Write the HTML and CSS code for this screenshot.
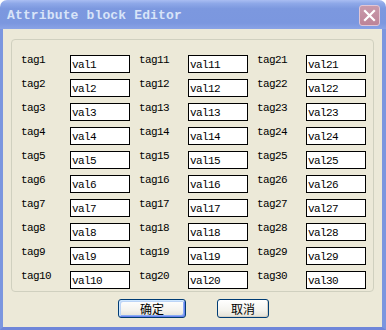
FILE: index.html
```html
<!DOCTYPE html>
<html lang="zh-CN">
<head>
    <meta charset="UTF-8">
    <title>Attribute block Editor</title>
    <link rel="stylesheet" href="styles.css">
</head>
<body>

    <div class="janela">
        <div class="titulo">
            <span class="titulo-texto">Attribute block Editor</span>
            <button class="fechar" aria-label="Fechar">
                <svg width="13" height="13" viewBox="0 0 13 13">
                    <path d="M2 2 L11 11 M11 2 L2 11" stroke="#ffffff" stroke-width="2.2" stroke-linecap="square" fill="none"/>
                </svg>
            </button>
        </div>
        <div class="cliente">
            <div class="grupo">
                <div class="campos">
                    <div class="campo"><span>tag1</span><input type="text" value="val1"></div>
                    <div class="campo"><span>tag2</span><input type="text" value="val2"></div>
                    <div class="campo"><span>tag3</span><input type="text" value="val3"></div>
                    <div class="campo"><span>tag4</span><input type="text" value="val4"></div>
                    <div class="campo"><span>tag5</span><input type="text" value="val5"></div>
                    <div class="campo"><span>tag6</span><input type="text" value="val6"></div>
                    <div class="campo"><span>tag7</span><input type="text" value="val7"></div>
                    <div class="campo"><span>tag8</span><input type="text" value="val8"></div>
                    <div class="campo"><span>tag9</span><input type="text" value="val9"></div>
                    <div class="campo"><span>tag10</span><input type="text" value="val10"></div>
                    <div class="campo"><span>tag11</span><input type="text" value="val11"></div>
                    <div class="campo"><span>tag12</span><input type="text" value="val12"></div>
                    <div class="campo"><span>tag13</span><input type="text" value="val13"></div>
                    <div class="campo"><span>tag14</span><input type="text" value="val14"></div>
                    <div class="campo"><span>tag15</span><input type="text" value="val15"></div>
                    <div class="campo"><span>tag16</span><input type="text" value="val16"></div>
                    <div class="campo"><span>tag17</span><input type="text" value="val17"></div>
                    <div class="campo"><span>tag18</span><input type="text" value="val18"></div>
                    <div class="campo"><span>tag19</span><input type="text" value="val19"></div>
                    <div class="campo"><span>tag20</span><input type="text" value="val20"></div>
                    <div class="campo"><span>tag21</span><input type="text" value="val21"></div>
                    <div class="campo"><span>tag22</span><input type="text" value="val22"></div>
                    <div class="campo"><span>tag23</span><input type="text" value="val23"></div>
                    <div class="campo"><span>tag24</span><input type="text" value="val24"></div>
                    <div class="campo"><span>tag25</span><input type="text" value="val25"></div>
                    <div class="campo"><span>tag26</span><input type="text" value="val26"></div>
                    <div class="campo"><span>tag27</span><input type="text" value="val27"></div>
                    <div class="campo"><span>tag28</span><input type="text" value="val28"></div>
                    <div class="campo"><span>tag29</span><input type="text" value="val29"></div>
                    <div class="campo"><span>tag30</span><input type="text" value="val30"></div>
                </div>
            </div>
            <div class="botoes">
                <button class="botao padrao">确定</button>
                <button class="botao cancelar">取消</button>
            </div>
        </div>
    </div>

</body>
</html>
```

FILE: styles.css
```css
body {
    margin: 0;
    background: #ffffff;
    font-family: 'Liberation Mono', monospace;
}
.janela {
    width: 386px;
    height: 330px;
    display: flex;
    flex-direction: column;
}
.titulo {
    height: 29px;
    flex: none;
    box-sizing: border-box;
    display: flex;
    align-items: center;
    padding: 0 6px 0 7px;
    border-radius: 7px 7px 0 0;
    background: linear-gradient(#a9bdf2 0%, #8ea8e8 12%, #7c98df 30%, #7b97df 80%, #8aa3e6 100%);
}
.titulo-texto {
    flex: 1;
    color: #d8e4f8;
    font-weight: bold;
    font-size: 13px;
    letter-spacing: 0.15px;
    margin-top: 1px;
}
.fechar {
    width: 21px;
    height: 21px;
    padding: 0;
    margin-top: 1px;
    border: 1px solid #e2c6d4;
    border-radius: 3px;
    background: linear-gradient(#c99aab, #bd8498);
    display: flex;
    align-items: center;
    justify-content: center;
}
.cliente {
    flex: 1;
    background: #ece9d8;
    border-left: 3px solid #7b96df;
    border-right: 4px solid #7b96df;
    border-bottom: 3px solid #6f86d9;
}
.grupo {
    box-sizing: border-box;
    width: 363px;
    height: 253px;
    margin: 10px 0 0 8px;
    border: 1px solid #d0d0bf;
    border-radius: 4px;
}
.campos {
    display: grid;
    grid-auto-flow: column;
    grid-template-rows: repeat(10, 18px);
    grid-template-columns: repeat(3, 109px);
    row-gap: 6px;
    column-gap: 9px;
    padding: 15px 0 0 9px;
}
.campo {
    display: flex;
    align-items: flex-start;
}
.campo span {
    width: 49px;
    font-size: 11px;
    letter-spacing: -0.6px;
    line-height: 12px;
    margin-top: -1px;
    color: #000000;
}
.campo input {
    box-sizing: border-box;
    width: 60px;
    height: 18px;
    margin: 0;
    padding: 1px 1px 0;
    border: 1px solid #000000;
    background: #ffffff;
    font-family: 'Liberation Mono', monospace;
    font-size: 11px;
    letter-spacing: -0.6px;
    color: #000000;
    outline: none;
}
.botoes {
    display: flex;
    gap: 31px;
    padding: 7px 0 0 115px;
}
.botao {
    box-sizing: border-box;
    height: 19px;
    padding: 0;
    border: 1px solid #003c74;
    border-radius: 3px;
    background: linear-gradient(#ffffff, #f4f3ee 60%, #e3e1d6);
    font-family: 'Noto Sans CJK SC', sans-serif;
    font-size: 12px;
    line-height: 16px;
    color: #000000;
}
.padrao {
    width: 68px;
    box-shadow: inset 1px 1px 0 #cee7ff, inset -1px -1px 0 #6982ee, inset 2px 2px 0 #bcd4f6, inset -2px -2px 0 #89adf4;
}
.cancelar {
    width: 52px;
    box-shadow: inset -1px -1px 0 #d6d0c5;
}
```
